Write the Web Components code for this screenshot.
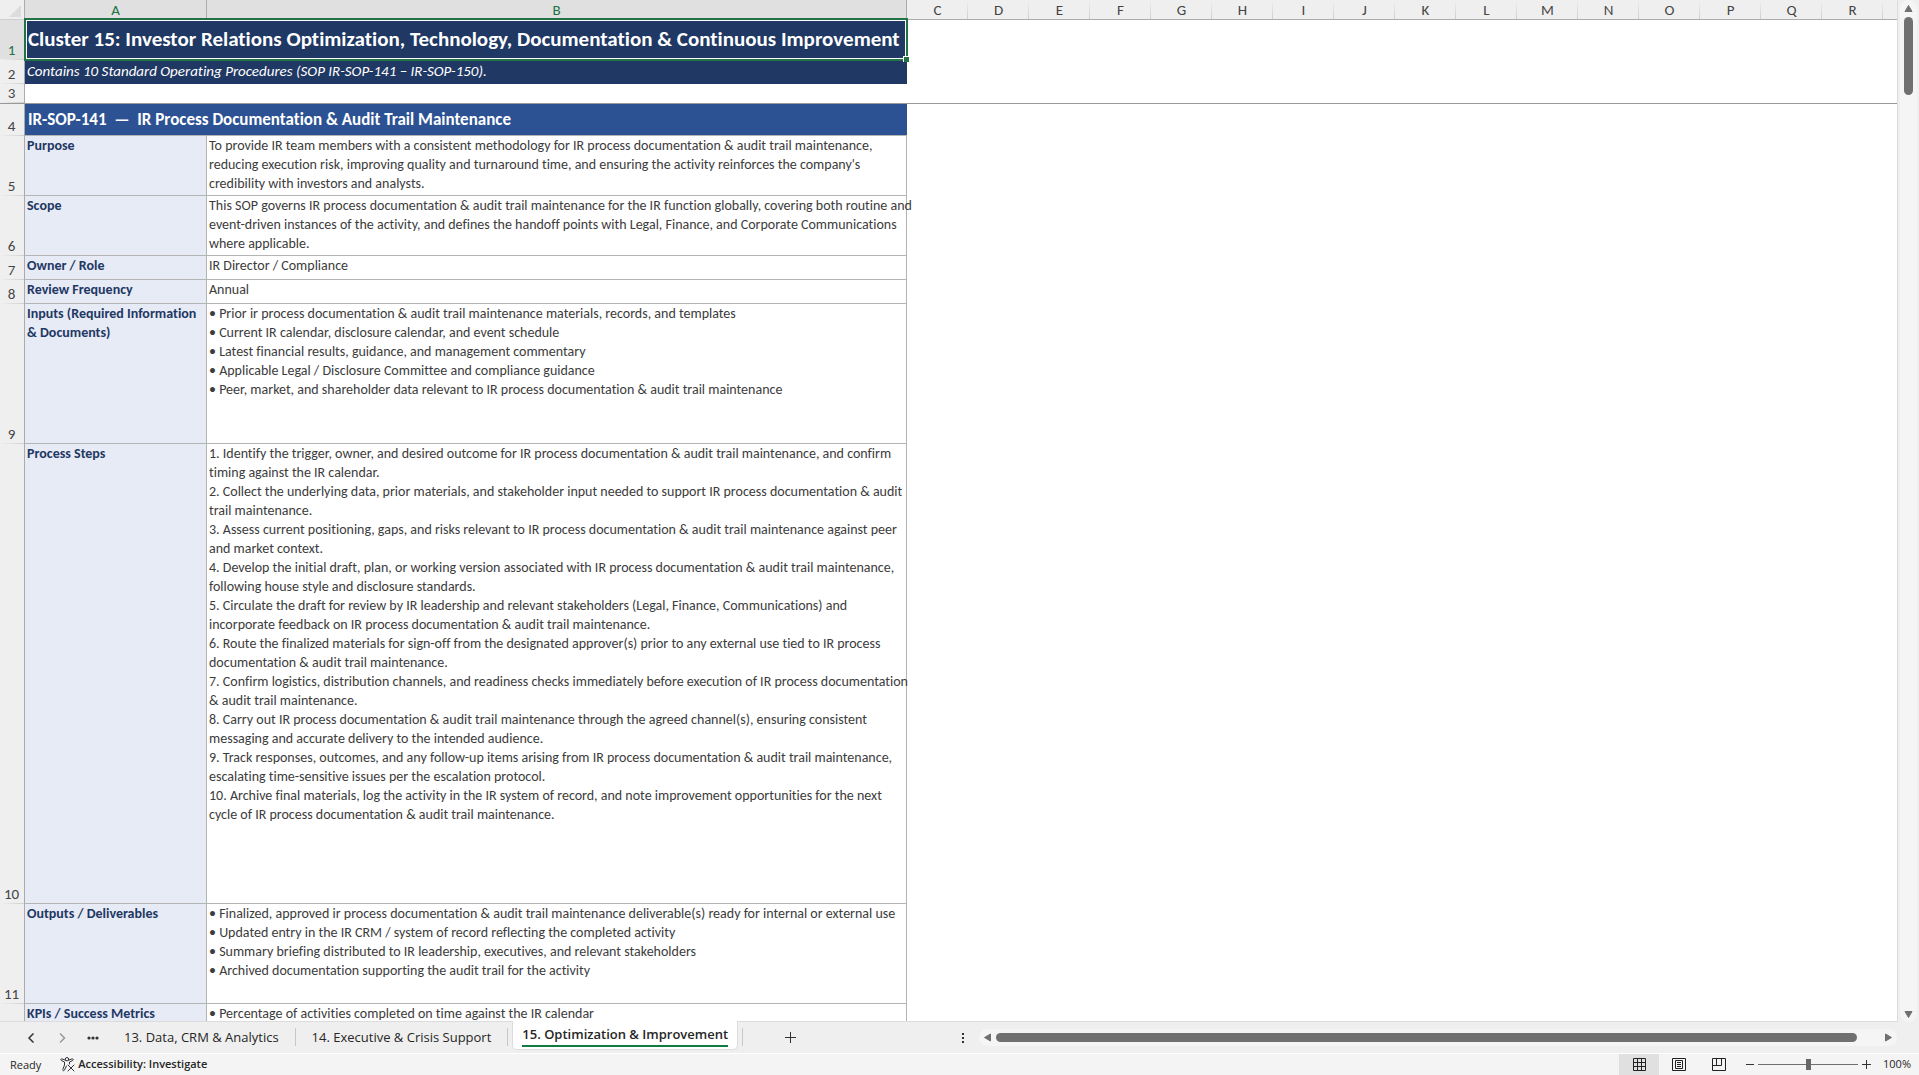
<!DOCTYPE html>
<html lang="en">
<head>
<meta charset="utf-8">
<title>Cluster 15</title>
<style>
html, body { height: 100%; margin: 0; }
body { overflow: hidden; background: #efefef; color: #262626; font-family: "Open Sans", "Noto Sans", sans-serif; }
</style>
</head>
<body>
<workbook-window>
  <sheet-grid></sheet-grid>
  <scroll-bar slot="side" direction="vertical"></scroll-bar>
  <sheet-tabs slot="tabs">
    <sheet-tab>13. Data, CRM &amp; Analytics</sheet-tab>
    <sheet-tab>14. Executive &amp; Crisis Support</sheet-tab>
    <sheet-tab active>15. Optimization &amp; Improvement</sheet-tab>
  </sheet-tabs>
  <status-bar slot="status"></status-bar>
</workbook-window>

<script>
class ShadowElement extends HTMLElement {
  constructor() {
    super();
    this.attachShadow({ mode: 'open' });
  }
  connectedCallback() {
    this.shadowRoot.innerHTML = this.render();
  }
}

customElements.define('workbook-window', class extends ShadowElement {
  render() {
    return `
      <style>
        :host { display: flex; flex-direction: column; height: 100vh; }
        main { display: flex; flex: 1; min-height: 0; }
        .sheet { flex: 1; min-width: 0; box-sizing: border-box; overflow: hidden; background: #fff; border: solid #dcdcdc; border-width: 0 1px 1px 0; }
      </style>
      <main><div class="sheet"><slot></slot></div><slot name="side"></slot></main>
      <slot name="tabs"></slot>
      <slot name="status"></slot>`;
  }
});

const ROWS = [
  { n: 5, h: 60, label: ['Purpose'], lines: [
    'To provide IR team members with a consistent methodology for IR process documentation & audit trail maintenance,',
    'reducing execution risk, improving quality and turnaround time, and ensuring the activity reinforces the company\'s',
    'credibility with investors and analysts.'] },
  { n: 6, h: 60, label: ['Scope'], lines: [
    'This SOP governs IR process documentation & audit trail maintenance for the IR function globally, covering both routine and',
    'event-driven instances of the activity, and defines the handoff points with Legal, Finance, and Corporate Communications',
    'where applicable.'] },
  { n: 7, h: 24, label: ['Owner / Role'], lines: ['IR Director / Compliance'] },
  { n: 8, h: 24, label: ['Review Frequency'], lines: ['Annual'] },
  { n: 9, h: 140, label: ['Inputs (Required Information', '& Documents)'], lines: [
    '• Prior ir process documentation & audit trail maintenance materials, records, and templates',
    '• Current IR calendar, disclosure calendar, and event schedule',
    '• Latest financial results, guidance, and management commentary',
    '• Applicable Legal / Disclosure Committee and compliance guidance',
    '• Peer, market, and shareholder data relevant to IR process documentation & audit trail maintenance'] },
  { n: 10, h: 460, label: ['Process Steps'], lines: [
    '1. Identify the trigger, owner, and desired outcome for IR process documentation & audit trail maintenance, and confirm',
    'timing against the IR calendar.',
    '2. Collect the underlying data, prior materials, and stakeholder input needed to support IR process documentation & audit',
    'trail maintenance.',
    '3. Assess current positioning, gaps, and risks relevant to IR process documentation & audit trail maintenance against peer',
    'and market context.',
    '4. Develop the initial draft, plan, or working version associated with IR process documentation & audit trail maintenance,',
    'following house style and disclosure standards.',
    '5. Circulate the draft for review by IR leadership and relevant stakeholders (Legal, Finance, Communications) and',
    'incorporate feedback on IR process documentation & audit trail maintenance.',
    '6. Route the finalized materials for sign-off from the designated approver(s) prior to any external use tied to IR process',
    'documentation & audit trail maintenance.',
    '7. Confirm logistics, distribution channels, and readiness checks immediately before execution of IR process documentation',
    '& audit trail maintenance.',
    '8. Carry out IR process documentation & audit trail maintenance through the agreed channel(s), ensuring consistent',
    'messaging and accurate delivery to the intended audience.',
    '9. Track responses, outcomes, and any follow-up items arising from IR process documentation & audit trail maintenance,',
    'escalating time-sensitive issues per the escalation protocol.',
    '10. Archive final materials, log the activity in the IR system of record, and note improvement opportunities for the next',
    'cycle of IR process documentation & audit trail maintenance.'] },
  { n: 11, h: 100, label: ['Outputs / Deliverables'], lines: [
    '• Finalized, approved ir process documentation & audit trail maintenance deliverable(s) ready for internal or external use',
    '• Updated entry in the IR CRM / system of record reflecting the completed activity',
    '• Summary briefing distributed to IR leadership, executives, and relevant stakeholders',
    '• Archived documentation supporting the audit trail for the activity'] },
  { n: '', h: 100, label: ['KPIs / Success Metrics'], lines: ['• Percentage of activities completed on time against the IR calendar'] }
];
const joinLines = lines => lines.map(t => t.replace(/&/g, '&amp;')).join('<br>');

customElements.define('sheet-grid', class extends ShadowElement {
  render() {
    const letters = [...'ABCDEFGHIJKLMNOPQR'];
    const rest = '<td colspan="17"></td>';
    return `
      <style>
        :host { display: block; font-family: Carlito, Calibri, Lato, sans-serif; font-variant-ligatures: none; }
        table { width: 100%; table-layout: fixed; border-collapse: separate; border-spacing: 0; }
        th, td { box-sizing: border-box; padding: 0; font-weight: 400; text-align: left; }
        .num { width: 25px; } .a { width: 182px; } .b { width: 700px; } .std { width: 61px; }
        thead th { height: 20px; background: #efefef; border-bottom: 1px solid #ababab; padding-top: 2px; font-size: 15px; line-height: 17px; text-align: center; color: #444;
          background-image: linear-gradient(#efefef, #cfcfcf); background-size: 1px 100%; background-repeat: no-repeat; background-position: right; }
        thead th.on { background: #e0e0e0; border-right: 1px solid #ababab; color: #217346; }
        thead th.corner { background: #efefef; border-right: 1px solid #ababab; border-bottom-color: #cfcfcf; }
        .corner svg { display: block; margin-left: 9px; }
        thead th.last { background-image: none; }
        tbody th { height: var(--h); padding: 0 1px 1px 0; vertical-align: bottom; text-align: center; font-size: 15px; line-height: 18px; color: #444; border-right: 1px solid #ababab;
          background: linear-gradient(90deg, #efefef, #cfcfcf) bottom / 100% 1px no-repeat #efefef; }
        tbody th.on { background-color: #e0e0e0; color: #217346; }
        td { white-space: pre; }
        .navy, .blue { color: #fff; vertical-align: middle; }
        .navy { background: #203864; padding-bottom: 2px; }
        .title { position: relative; padding-left: 3px; font-size: 21px; font-weight: 700; }
        .sub { padding-left: 2px; font-size: 15px; line-height: 18px; font-style: italic; }
        .blue { background: #2c5294; padding-left: 3px; font-size: 17px; font-weight: 700; border-bottom: 1px solid #b4b4b4; }
        .freeze > * { border-bottom: 1px solid #999; }
        .label, .text { vertical-align: top; font-size: 14px; line-height: 19px; border: solid #b4b4b4; border-width: 0 1px 1px 0; padding-left: 2px; }
        .label { background: #e7ebf5; color: #1f3864; font-weight: 700; }
        .text { color: #3c3c3c; }
        .cursor { position: absolute; inset: -2px -1px -1px; border: 2px solid #217346; box-shadow: inset 0 0 0 1px #fff; }
        .cursor::after { content: ""; position: absolute; right: -3px; bottom: -3px; width: 5px; height: 5px; background: #217346; border: solid #fff; border-width: 1px 0 0 1px; }
      </style>
      <table>
        <colgroup><col class="num"><col class="a"><col class="b">${'<col class="std">'.repeat(16)}<col></colgroup>
        <thead><tr>
          <th class="corner"><svg width="12" height="12" viewBox="0 0 12 12"><path d="M12 0V12H0z" fill="#dcdcdc"/></svg></th>
          ${letters.map(l => `<th scope="col"${l < 'C' ? ' class="on"' : ''}>${l}</th>`).join('')}<th class="last"></th>
        </tr></thead>
        <tbody>
          <tr><th scope="row" class="on" style="--h:40px">1</th><td colspan="2" class="navy title">Cluster 15: Investor Relations Optimization, Technology, Documentation &amp; Continuous Improvement<span class="cursor"></span></td>${rest}</tr>
          <tr><th scope="row" style="--h:24px">2</th><td colspan="2" class="navy sub">Contains 10 Standard Operating Procedures (SOP IR-SOP-141 – IR-SOP-150).</td>${rest}</tr>
          <tr class="freeze"><th scope="row" style="--h:20px">3</th><td colspan="2"></td>${rest}</tr>
          <tr><th scope="row" style="--h:32px">4</th><td colspan="2" class="blue">IR-SOP-141  —  IR Process Documentation &amp; Audit Trail Maintenance</td>${rest}</tr>
          ${ROWS.map(r => `<tr><th scope="row" style="--h:${r.h}px">${r.n}</th><td class="label">${joinLines(r.label)}</td><td class="text">${joinLines(r.lines)}</td>${rest}</tr>`).join('')}
        </tbody>
      </table>`;
  }
});

customElements.define('scroll-bar', class extends ShadowElement {
  render() {
    const vertical = this.getAttribute('direction') === 'vertical';
    const arrow = (d, name) => `<button aria-label="${name}"><svg width="9" height="9" viewBox="0 0 9 9"><path d="${d}" fill="#707070" stroke="#707070" stroke-linejoin="round"/></svg></button>`;
    return vertical ? `
      <style>
        :host { display: flex; width: 21px; background: #efefef; }
        .track { display: flex; flex-direction: column; align-items: center; flex: 1; margin: 0 2px; background: #f5f5f5; border-radius: 9px; padding: 4px 0 3px; }
        button { display: block; border: 0; padding: 0; background: none; height: 9px; }
        .thumb { width: 9px; height: 78px; border-radius: 5px; background: #707070; margin-top: 4px; }
        .gap { flex: 1; }
        svg { display: block; }
      </style>
      <div class="track">${arrow('M4.5 1.5 8 7.5H1z', 'Scroll up')}<div class="thumb"></div><div class="gap"></div>${arrow('M4.5 7.5 8 1.5H1z', 'Scroll down')}</div>` : `
      <style>
        :host { display: block; }
        .track { display: flex; align-items: center; height: 17px; background: #f5f5f5; border-radius: 9px; padding: 0 4px; }
        button { display: block; border: 0; padding: 0; background: none; width: 9px; }
        .thumb { flex: 1; height: 9px; border-radius: 5px; background: #707070; margin: 0 27px 0 4px; }
        svg { display: block; }
      </style>
      <div class="track">${arrow('M1.5 4.5 7.5 1V8z', 'Scroll left')}<div class="thumb"></div>${arrow('M7.5 4.5 1.5 1V8z', 'Scroll right')}</div>`;
  }
});

customElements.define('sheet-tab', class extends ShadowElement {
  render() {
    return `
      <style>
        :host { display: flex; align-items: flex-start; }
        button { height: 31px; border: 0; margin: 0; padding: 0 16px 2px; background: none; color: #262626; font: 13px/18px "Open Sans", "Noto Sans", sans-serif; white-space: nowrap; }
        :host::after { content: ""; width: 1px; height: 18px; margin-top: 6px; background: #c8c8c8; }
        :host([active]) button { position: relative; height: 29px; margin: -1px 4px 0; padding: 2px 9px 0; background: #fff; border: solid #dcdcdc; border-width: 0 1px 1px; border-radius: 0 0 5px 5px; font-weight: 600; }
        :host([active]) span { display: block; padding-bottom: 2px; border-bottom: 2px solid #107c41; }
      </style>
      <button role="tab"><span><slot></slot></span></button>`;
  }
});

customElements.define('sheet-tabs', class extends ShadowElement {
  render() {
    return `
      <style>
        :host { display: flex; align-items: center; height: 31px; background: #efefef; }
        button { display: grid; place-items: center; width: 33px; height: 30px; border: 0; padding: 0; background: none; }
        .strip { display: flex; align-items: center; width: 51%; }
        .nav { display: flex; padding: 0 0 0 15px; width: 93px; }
        .tabs { display: flex; height: 31px; width: 633px; }
        .add { margin-left: 33px; }
        .dots { width: 31px; margin-left: auto; }
        scroll-bar { flex: 1; margin: 0 22px 1px 0; }
      </style>
      <div class="strip">
        <div class="nav">
          <button aria-label="Previous sheet"><svg width="12" height="12" viewBox="0 0 12 12"><path d="M8.500 1.500 4 6l4.500 4.500" fill="none" stroke="#333" stroke-width="1.500"/></svg></button>
          <button aria-label="Next sheet"><svg width="12" height="12" viewBox="0 0 12 12"><path d="M4 1.500 8.500 6 4 10.500" fill="none" stroke="#999" stroke-width="1.500"/></svg></button>
          <button aria-label="All sheets"><svg width="12" height="4" viewBox="0 0 12 4"><g fill="#333"><circle cx="2" cy="2" r="1.600"/><circle cx="6" cy="2" r="1.600"/><circle cx="10" cy="2" r="1.600"/></g></svg></button>
        </div>
        <div class="tabs" role="tablist"><slot></slot></div>
        <button class="add" aria-label="New sheet"><svg width="11" height="11" viewBox="0 0 11 11"><path d="M5.500 0V11M0 5.500H11" stroke="#333"/></svg></button>
        <button class="dots" aria-label="Resize tab strip"><svg width="2" height="10" viewBox="0 0 2 10"><path d="M0 0H2V2H0zM0 4H2V6H0zM0 8H2V10H0z" fill="#333"/></svg></button>
      </div>
      <scroll-bar direction="horizontal"></scroll-bar>`;
  }
});

customElements.define('status-bar', class extends ShadowElement {
  render() {
    return `
      <style>
        :host { display: flex; align-items: center; height: 21px; border-top: 1px solid #fff; background: #f4f4f4; padding: 0 8px 0 10px; font-size: 11px; line-height: 20px; color: #262626; }
        button { display: flex; align-items: center; justify-content: center; border: 0; padding: 0; background: none; font: inherit; color: inherit; height: 21px; }
        .acc { gap: 3px; margin-left: 19px; padding-bottom: 1px; font-weight: 600; }
        .views { display: flex; margin-left: auto; }
        .views button { width: 40px; padding-bottom: 1px; }
        .views .on { background: #e0e0e0; }
        .zoom { display: flex; align-items: center; margin-left: 2px; }
        .zoom button { width: 17px; padding-bottom: 1px; }
        input { appearance: none; width: 100px; height: 11px; margin: 0; background: linear-gradient(#707070, #707070) center / 100% 1px no-repeat; }
        input::-webkit-slider-thumb { appearance: none; width: 5px; height: 11px; background: #666; }
        .zoom .pct { margin-left: 6px; width: 30px; justify-content: flex-end; }
        svg { display: block; }
      </style>
      <span>Ready</span>
      <button class="acc">
        <svg width="15" height="15" viewBox="0 0 15 15" fill="none" stroke="#333" stroke-linecap="round" stroke-linejoin="round"><circle cx="7" cy="2.200" r="1.700"/><path d="M5.300 3.200 2 1.900C.8 1.500.2 3 1.300 3.500L4.500 5v3L2.800 12.500c-.4 1.200 1.100 1.700 1.600.7L6.500 9M8.700 3.200 12 1.900c1.200-.4 1.800 1.100.7 1.600L9.500 5v2M8 8l6 6M14 8l-6 6"/></svg>
        <span>Accessibility: Investigate</span>
      </button>
      <div class="views">
        <button class="on" aria-label="Normal"><svg width="13" height="13" viewBox="0 0 13 13"><path d="M.5.5h12v12H.5zM4.500 0v13M8.500 0v13M0 4.500h13M0 8.500h13" fill="none" stroke="#222"/></svg></button>
        <button aria-label="Page layout"><svg width="14" height="13" viewBox="0 0 14 13"><path d="M.5.5h13v12H.5zM3.500 2.500h7v8h-7zM5 4.500h4M5 6.500h4M5 8.500h4" fill="none" stroke="#222"/></svg></button>
        <button aria-label="Page break preview"><svg width="14" height="13" viewBox="0 0 14 13"><path d="M.5.5h13v12H.5zM4.500.5v7M9.500.5v7M.5 7.500h9" fill="none" stroke="#222"/></svg></button>
      </div>
      <div class="zoom">
        <button aria-label="Zoom out"><svg width="8" height="9" viewBox="0 0 8 9"><path d="M0 4.500H8" stroke="#333"/></svg></button>
        <input type="range" min="0" max="100" value="50" aria-label="Zoom">
        <button aria-label="Zoom in"><svg width="9" height="9" viewBox="0 0 9 9"><path d="M4.500 0V9M0 4.500H9" stroke="#333"/></svg></button>
        <button class="pct">100%</button>
      </div>`;
  }
});
</script>
</body>
</html>
